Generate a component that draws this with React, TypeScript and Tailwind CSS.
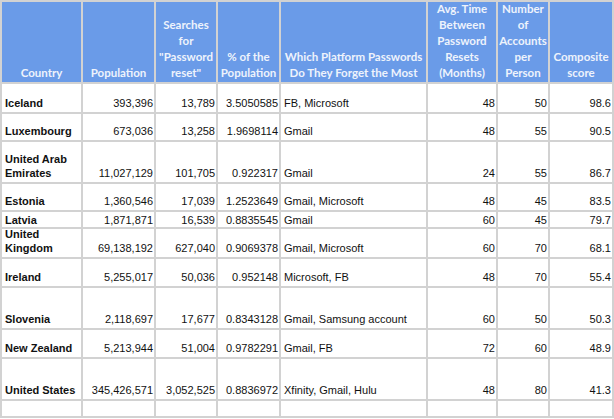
import React from "react";

type Row = {
  country: string;
  pop: string;
  searches: string;
  pct: string;
  platform: string;
  avg: string;
  accounts: string;
  score: string;
  tight?: boolean;
};

const rows: Row[] = [
  { country: "Iceland", pop: "393,396", searches: "13,789", pct: "3.5050585", platform: "FB, Microsoft", avg: "48", accounts: "50", score: "98.6" },
  { country: "Luxembourg", pop: "673,036", searches: "13,258", pct: "1.9698114", platform: "Gmail", avg: "48", accounts: "55", score: "90.5" },
  { country: "United Arab Emirates", pop: "11,027,129", searches: "101,705", pct: "0.922317", platform: "Gmail", avg: "24", accounts: "55", score: "86.7" },
  { country: "Estonia", pop: "1,360,546", searches: "17,039", pct: "1.2523649", platform: "Gmail, Microsoft", avg: "48", accounts: "45", score: "83.5" },
  { country: "Latvia", pop: "1,871,871", searches: "16,539", pct: "0.8835545", platform: "Gmail", avg: "60", accounts: "45", score: "79.7", tight: true },
  { country: "United Kingdom", pop: "69,138,192", searches: "627,040", pct: "0.9069378", platform: "Gmail, Microsoft", avg: "60", accounts: "70", score: "68.1" },
  { country: "Ireland", pop: "5,255,017", searches: "50,036", pct: "0.952148", platform: "Microsoft, FB", avg: "48", accounts: "70", score: "55.4" },
  { country: "Slovenia", pop: "2,118,697", searches: "17,677", pct: "0.8343128", platform: "Gmail, Samsung account", avg: "60", accounts: "50", score: "50.3" },
  { country: "New Zealand", pop: "5,213,944", searches: "51,004", pct: "0.9782291", platform: "Gmail, FB", avg: "72", accounts: "60", score: "48.9" },
  { country: "United States", pop: "345,426,571", searches: "3,052,525", pct: "0.8836972", platform: "Xfinity, Gmail, Hulu", avg: "48", accounts: "80", score: "41.3" },
];

const headers: string[][] = [
  ["Country"],
  ["Population"],
  ["Searches", "for", "\"Password", "reset\""],
  ["% of the", "Population"],
  ["Which Platform Passwords", "Do They Forget the Most"],
  ["Avg. Time", "Between", "Password", "Resets", "(Months)"],
  ["Number", "of", "Accounts", "per", "Person"],
  ["Composite", "score"],
];

function Head({ lines }: { lines: string[] }) {
  return (
    <div className="bg-[#6a9be8] flex flex-col justify-end items-center text-center leading-[16px] pb-[1px] text-[#eef3fc] font-bold text-[11.5px] [font-family:Lato,'Open_Sans',sans-serif] whitespace-nowrap overflow-hidden">
      {lines.map((l, i) => (
        <div key={i}>{l}</div>
      ))}
    </div>
  );
}

function Num({ v, tight }: { v: string; tight?: boolean }) {
  return (
    <div className={`bg-white flex items-end justify-end pr-[1px] ${tight ? "pb-0" : "pb-[2px]"}`}>
      <span>{v}</span>
    </div>
  );
}

function Txt({ v, tight, bold }: { v: string; tight?: boolean; bold?: boolean }) {
  return (
    <div className={`bg-white flex items-end pl-[3px] pr-[2px] ${tight ? "pb-0" : "pb-[2px]"} ${bold ? "font-bold" : ""}`}>
      <span>{v}</span>
    </div>
  );
}

export default function App() {
  return (
    <div className="w-[614px] h-[419px] bg-white overflow-hidden">
      <div className="w-[614px] grid grid-cols-[79px_71px_60px_61px_145px_68px_50px_62px] grid-rows-[80px_28px_26px_40px_26px_15px_28px_27px_40px_27px_40px_15px] gap-[2px] p-[2px] bg-[#d2d2d2] text-[11px] leading-[14px] text-[#111] [font-family:'Liberation_Sans',Arial,sans-serif]">
        {headers.map((h, i) => (
          <Head key={i} lines={h} />
        ))}
        {rows.map((r, i) => (
          <React.Fragment key={i}>
            <Txt v={r.country} tight={r.tight} bold />
            <Num v={r.pop} tight={r.tight} />
            <Num v={r.searches} tight={r.tight} />
            <Num v={r.pct} tight={r.tight} />
            <Txt v={r.platform} tight={r.tight} />
            <Num v={r.avg} tight={r.tight} />
            <Num v={r.accounts} tight={r.tight} />
            <Num v={r.score} tight={r.tight} />
          </React.Fragment>
        ))}
        {Array.from({ length: 8 }).map((_, i) => (
          <div key={`e${i}`} className="bg-white" />
        ))}
      </div>
    </div>
  );
}
